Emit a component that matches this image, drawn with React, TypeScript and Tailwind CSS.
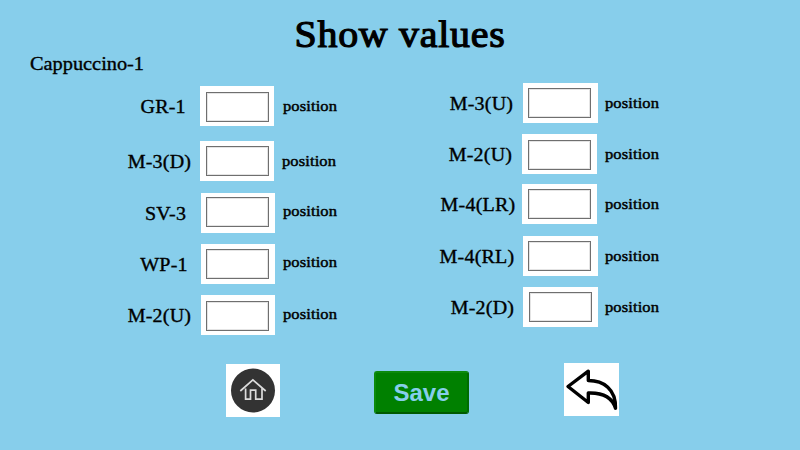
type Row = { name: string; row: string; label: string; box: string; unit: string };

const left: Row[] = [
  { name: "GR-1", row: "", label: "pr-[14px]", box: "w-[74px] pt-[6px] pl-[6px]", unit: "ml-[9px] mt-[12px]" },
  { name: "M-3(D)", row: "mt-[15px]", label: "pr-[9px]", box: "w-[74px] pt-[5px] pl-[6px]", unit: "ml-[8px] mt-[12px]" },
  { name: "SV-3", row: "mt-[12px]", label: "pr-[14px]", box: "w-[74px] ml-px pt-[4px] pl-[5px]", unit: "ml-[8px] mt-[10px]" },
  { name: "WP-1", row: "mt-[11px]", label: "pr-[12px]", box: "w-[74px] ml-px pt-[5px] pl-[5px]", unit: "ml-[8px] mt-[10px]" },
  { name: "M-2(U)", row: "mt-[11px]", label: "pr-[9px]", box: "w-[74px] ml-px pt-[6px] pl-[5px]", unit: "ml-[8px] mt-[11px]" },
];

const right: Row[] = [
  { name: "M-3(U)", row: "", label: "pr-[9px]", box: "w-[75px] ml-px pt-[5px] pl-[5px]", unit: "ml-[7px] mt-[12px]" },
  { name: "M-2(U)", row: "mt-[11px]", label: "pr-[10px]", box: "w-[75px] pt-[6px] pl-[6px]", unit: "ml-[8px] mt-[12px]" },
  { name: "M-4(LR)", row: "mt-[10px]", label: "pr-[7px]", box: "w-[75px] pt-[5px] pl-[6px]", unit: "ml-[8px] mt-[12px]" },
  { name: "M-4(RL)", row: "mt-[12px]", label: "pr-[8px]", box: "w-[75px] ml-px pt-[5px] pl-[5px]", unit: "ml-[7px] mt-[12px]" },
  { name: "M-2(D)", row: "mt-[11px]", label: "pr-[8px]", box: "w-[75px] ml-px pt-[5px] pl-[6px]", unit: "ml-[7px] mt-[12px]" },
];

function Column({ rows, className }: { rows: Row[]; className: string }) {
  return (
    <div className={`flex w-[260px] flex-col ${className}`}>
      {rows.map((r) => (
        <div key={r.name} className={`flex h-[40px] items-start ${r.row}`}>
          <div className={`mt-[11px] w-[100px] shrink-0 text-right text-[18px] leading-[20px] whitespace-nowrap tracking-[0.2px] [-webkit-text-stroke:0.35px_black] ${r.label}`}>
            <span className="inline-block origin-right scale-x-[1.11]">{r.name}</span>
          </div>
          <div className={`h-[40px] shrink-0 bg-white ${r.box}`}>
            <input aria-label={r.name} className="block h-[30px] w-[63px] border border-[#6f6f6f] bg-white shadow-[inset_0_0_0_1px_#e4e4e4] outline-none" />
          </div>
          <span className={`origin-left scale-x-[1.1] text-[15px] leading-[16px] tracking-[0.1px] [-webkit-text-stroke:0.45px_black] ${r.unit}`}>
            position
          </span>
        </div>
      ))}
    </div>
  );
}

export default function App() {
  return (
    <main className="h-[450px] w-[800px] overflow-hidden bg-[#87ceeb] font-['Liberation_Serif',serif] text-black">
      <h1 className="h-[54px] scale-x-[1.05] pt-[15px] text-center text-[38px] leading-[38px] tracking-[0.7px] [-webkit-text-stroke:1.2px_black]">
        Show values
      </h1>
      <h2 className="h-[29px] pl-[30px] text-[19px] leading-[20px] [-webkit-text-stroke:0.35px_black]">
        <span className="inline-block origin-left scale-x-[1.07]">Cappuccino-1</span>
      </h2>
      <div className="flex h-[280px] items-start">
        <Column rows={left} className="ml-[100px] mt-[3px]" />
        <Column rows={right} className="ml-[62px]" />
      </div>
      <div className="flex items-start">
        <button aria-label="Home" className="mt-px ml-[226px] h-[53px] w-[54px] bg-white">
          <svg viewBox="0 0 54 53" className="h-[53px] w-[54px]" fill="none">
            <circle cx="27" cy="26.500" r="22" fill="#333" />
            <path d="M14.300 27 26.900 15.900 39.700 27M19.600 24.500v10.700h4.900v-9h5.200v9h6.300V24.500" stroke="#dcdcdc" strokeWidth="1.700" />
          </svg>
        </button>
        <button className="mt-[8px] ml-[94px] h-[43px] w-[95px] rounded-[3px] border-2 border-t-[#0c8a0c] border-r-[#006c00] border-b-[#005a00] border-l-[#0c8a0c] bg-[#008000] font-['Liberation_Sans',sans-serif] text-[24px] leading-[39px] font-bold text-[#87ceeb]">
          Save
        </button>
        <button aria-label="Back" className="ml-[95px] h-[53px] w-[55px] bg-white">
          <svg viewBox="0 0 55 53" className="h-[53px] w-[55px]" fill="none">
            <path
              d="M4 23.500 24.300 8.200v9.300C39.500 17.500 52 26 51.500 45.200 48 34 38 29.500 24.300 30v9.500Z"
              stroke="black"
              strokeWidth="3.400"
              strokeLinejoin="round"
            />
          </svg>
        </button>
      </div>
    </main>
  );
}
